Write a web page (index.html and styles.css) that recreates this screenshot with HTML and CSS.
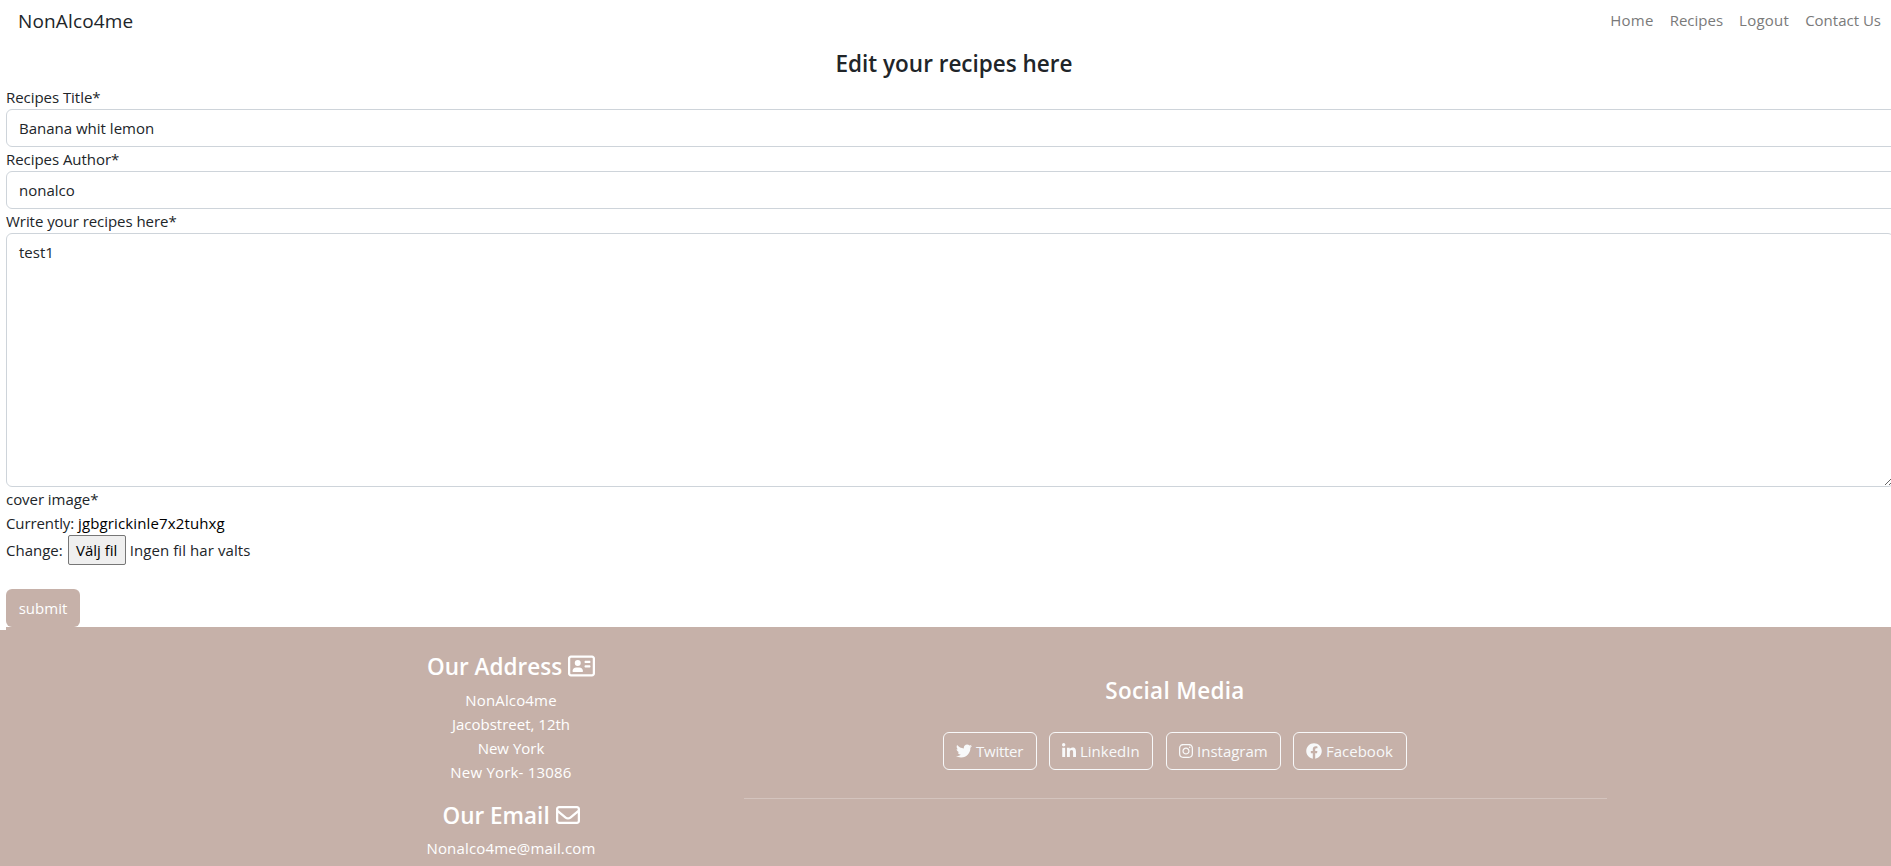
FILE: index.html
```html
<!DOCTYPE html>
<html lang="en">
<head>
<meta charset="utf-8">
<title>NonAlco4me</title>
<link rel="stylesheet" href="styles.css">
</head>
<body>
<nav class="navbar">
  <a class="brand">NonAlco4me</a>
  <div class="nav-links">
    <a class="home">Home</a><a class="recipes">Recipes</a><a class="logout">Logout</a><a class="contact">Contact Us</a>
  </div>
</nav>
<main class="content">
  <h1 class="title">Edit your recipes here</h1>
  <form class="recipe-form">
    <label class="label" for="title">Recipes Title*</label>
    <input class="control" id="title" type="text" value="Banana whit lemon">
    <label class="label" for="author">Recipes Author*</label>
    <input class="control" id="author" type="text" value="nonalco">
    <label class="label" for="body">Write your recipes here*</label>
    <textarea class="control area" id="body">test1</textarea>
    <div class="label">cover image*</div>
    <div class="current"><span class="tight">Currently:</span> <a class="file-link">jgbgrickinle7x2tuhxg</a></div>
    <div class="change"><span>Change:</span><button class="file-btn" type="button">Välj fil</button><span class="file-name">Ingen fil har valts</span></div>
    <button class="submit" type="button">submit</button>
  </form>
</main>
<footer class="footer">
  <div class="row">
    <section class="contact-col">
      <h2>Our Address <svg class="icon-card" viewBox="0 0 576 512"><path d="M512 80c8.800 0 16 7.200 16 16v320c0 8.800-7.200 16-16 16H64c-8.800 0-16-7.200-16-16V96c0-8.800 7.200-16 16-16h448zM64 32C28.700 32 0 60.700 0 96v320c0 35.300 28.700 64 64 64h448c35.300 0 64-28.700 64-64V96c0-35.300-28.700-64-64-64H64zm144 224a64 64 0 1 0 0-128 64 64 0 1 0 0 128zm-32 32c-44.200 0-80 35.800-80 80 0 8.800 7.200 16 16 16h192c8.800 0 16-7.200 16-16 0-44.200-35.800-80-80-80h-64zM376 144c-13.300 0-24 10.700-24 24s10.700 24 24 24h80c13.300 0 24-10.700 24-24s-10.700-24-24-24h-80zm0 96c-13.300 0-24 10.700-24 24s10.700 24 24 24h80c13.300 0 24-10.700 24-24s-10.700-24-24-24h-80z"/></svg></h2>
      <p class="address"><span class="a1">NonAlco4me</span><br>Jacobstreet, 12th<br>New York<br><span class="a4">New York- 13086</span></p>
      <h2 class="email-title">Our Email <svg class="icon-mail" viewBox="0 0 512 512"><path d="M64 112c-8.800 0-16 7.200-16 16v22.100L220.500 291.700c20.700 17 50.400 17 71.100 0L464 150.100V128c0-8.800-7.200-16-16-16H64zM48 212.200V384c0 8.800 7.200 16 16 16h384c8.800 0 16-7.200 16-16V212.200L322 328.800c-38.400 31.500-93.700 31.500-132 0L48 212.200zM0 128c0-35.300 28.700-64 64-64h384c35.300 0 64 28.700 64 64v256c0 35.300-28.700 64-64 64H64c-35.300 0-64-28.700-64-64V128z"/></svg></h2>
      <p class="mail">Nonalco4me@mail.com</p>
    </section>
    <section class="social-col">
      <h2 class="social-title">Social Media</h2>
      <div class="buttons">
        <a class="social tw"><svg class="icon" viewBox="0 0 512 512"><path d="M459.370 151.716c.325 4.548.325 9.097.325 13.645 0 138.720-105.583 298.558-298.558 298.558-59.452 0-114.680-17.219-161.137-47.106 8.447.974 16.568 1.299 25.340 1.299 49.055 0 94.213-16.568 130.274-44.832-46.132-.975-84.792-31.188-98.112-72.772 6.498.974 12.995 1.624 19.818 1.624 9.421 0 18.843-1.300 27.614-3.573-48.081-9.747-84.143-51.980-84.143-102.985v-1.299c13.969 7.797 30.214 12.670 47.431 13.319-28.264-18.843-46.781-51.005-46.781-87.391 0-19.492 5.197-37.360 14.294-52.954 51.655 63.675 129.300 105.258 216.365 109.807-1.624-7.797-2.599-15.918-2.599-24.040 0-57.828 46.782-104.934 104.934-104.934 30.213 0 57.502 12.670 76.670 33.137 23.715-4.548 46.456-13.320 66.599-25.340-7.798 24.366-24.366 44.833-46.132 57.827 21.117-2.273 41.584-8.122 60.426-16.243-14.292 20.791-32.161 39.308-52.628 54.253z"/></svg><span>Twitter</span></a>
        <a class="social li"><svg class="icon narrow" viewBox="0 0 448 512"><path d="M100.280 448H7.400V148.900h92.880zM53.790 108.100C24.090 108.100 0 83.500 0 53.800a53.790 53.790 0 0 1 107.580 0c0 29.700-24.100 54.300-53.790 54.300zM447.900 448h-92.680V302.400c0-34.700-.7-79.200-48.290-79.200-48.290 0-55.690 37.700-55.690 76.700V448h-92.780V148.900h89.080v40.800h1.300c12.400-23.500 42.690-48.300 87.880-48.300 94 0 111.280 61.900 111.280 142.300V448z"/></svg><span>LinkedIn</span></a>
        <a class="social ig"><svg class="icon narrow" viewBox="0 0 448 512"><path d="M224.100 141c-63.600 0-114.900 51.300-114.900 114.900s51.300 114.900 114.900 114.900S339 319.500 339 255.900 287.700 141 224.100 141zm0 189.600c-41.100 0-74.700-33.500-74.700-74.700s33.500-74.700 74.700-74.700 74.700 33.500 74.700 74.700-33.600 74.700-74.700 74.700zm146.400-194.300c0 14.900-12 26.800-26.800 26.800-14.900 0-26.800-12-26.800-26.800s12-26.800 26.800-26.800 26.800 12 26.800 26.800zm76.100 27.200c-1.700-35.900-9.900-67.700-36.200-93.900-26.200-26.200-58-34.400-93.900-36.200-37-2.100-147.900-2.100-184.900 0-35.800 1.700-67.600 9.900-93.900 36.100s-34.400 58-36.200 93.900c-2.100 37-2.100 147.900 0 184.900 1.700 35.900 9.900 67.700 36.200 93.900s58 34.400 93.900 36.200c37 2.100 147.900 2.100 184.900 0 35.900-1.700 67.700-9.900 93.900-36.200 26.200-26.200 34.400-58 36.200-93.900 2.100-37 2.100-147.800 0-184.800zM398.800 388c-7.800 19.600-22.900 34.700-42.600 42.600-29.500 11.700-99.500 9-132.100 9s-102.700 2.600-132.100-9c-19.600-7.800-34.700-22.900-42.600-42.600-11.700-29.500-9-99.500-9-132.100s-2.600-102.700 9-132.100c7.800-19.600 22.900-34.700 42.600-42.600 29.500-11.700 99.500-9 132.100-9s102.700-2.600 132.100 9c19.600 7.800 34.700 22.900 42.600 42.600 11.700 29.500 9 99.500 9 132.100s2.700 102.700-9 132.100z"/></svg><span>Instagram</span></a>
        <a class="social fb"><svg class="icon" viewBox="0 0 512 512"><path d="M504 256C504 119 393 8 256 8S8 119 8 256c0 123.780 90.690 226.380 209.250 245V327.690h-63V256h63v-54.640c0-62.150 37-96.480 93.670-96.480 27.140 0 55.520 4.840 55.520 4.840v61h-31.280c-30.800 0-40.410 19.120-40.410 38.730V256h68.780l-11 71.690h-57.780V501C413.310 482.380 504 379.780 504 256z"/></svg><span>Facebook</span></a>
      </div>
      <hr class="rule">
    </section>
  </div>
</footer>
</body>
</html>
```
FILE: styles.css
```css
* { box-sizing: border-box; }
html { overflow: hidden; }
body {
  margin: 0;
  height: 866px;
  overflow: hidden;
  font: 15px/24px "Open Sans", "Noto Sans", sans-serif;
  color: #212529;
  background: #fff;
}
h1, h2, p { margin: 0; }
svg { fill: currentColor; }

.navbar {
  display: flex;
  align-items: center;
  justify-content: space-between;
  height: 42px;
  padding: 0 10px 0 18px;
}
.brand { font-size: 19px; line-height: 30px; letter-spacing: .15px; }
.nav-links { display: flex; gap: 16px; padding-bottom: 2px; color: #7a7a7a; }
.home, .logout { letter-spacing: .25px; }

.content { width: 1891px; margin-left: 6px; }
.title {
  padding: 7px 0 7px 5px;
  font-size: 22.5px;
  font-weight: 600;
  line-height: 29px;
  text-align: center;
}
.recipe-form { display: flex; flex-direction: column; }
.label { display: block; letter-spacing: -.05px; }
.control {
  display: block;
  width: 100%;
  height: 38px;
  margin: 0;
  padding: 6px 12px;
  border: 1px solid #ced4da;
  border-radius: 6px;
  background: #fff;
  color: #212529;
  font: inherit;
  outline: 0;
}
.area { width: calc(100% - 3px); height: 254px; resize: vertical; }
.tight { letter-spacing: -.1px; }
.file-link { color: #000; letter-spacing: .13px; }
.change { display: flex; align-items: center; height: 30px; }
.file-btn {
  width: 58px;
  height: 30px;
  margin: 0 4px 0 5px;
  padding: 0;
  border: 1px solid #767676;
  border-radius: 2px;
  background: #efefef;
  color: #000;
  font: inherit;
}
.file-name { letter-spacing: .08px; }
.submit {
  align-self: flex-start;
  width: 74px;
  height: 38px;
  margin-top: 24px;
  padding: 0;
  border: 0;
  border-radius: 6px;
  background: #c6b1a9;
  color: #fff;
  font: inherit;
}

.footer {
  height: 239px;
  padding-top: 25px;
  background: linear-gradient(#fff, #fff) 0 0 / 6px 3px no-repeat #c6b1a9;
  color: #fff;
}
.row { display: flex; width: 1328px; margin-left: 279px; text-align: center; }
.contact-col { width: 464px; }
.social-col { width: 864px; padding-top: 24px; }
.footer h2 { height: 29px; margin-bottom: 7px; font-size: 22.5px; font-weight: 600; line-height: 29px; white-space: nowrap; }
.icon-card { width: 27px; height: 24px; vertical-align: -3px; }
.icon-mail { width: 24px; height: 24px; vertical-align: -3px; }
.address { margin-bottom: 17px; }
.footer .email-title { margin-bottom: 6px; }
.a1, .mail { letter-spacing: .16px; }
.a4 { letter-spacing: .2px; }
.footer .social-title { margin-bottom: 27px; letter-spacing: .3px; }
.buttons { display: flex; justify-content: center; gap: 12px; }
.social {
  display: flex;
  align-items: center;
  gap: 4px;
  height: 38px;
  padding-left: 12px;
  border: 1px solid #f8f9fa;
  border-radius: 6px;
  color: #f8f9fa;
}
.icon { width: 16px; height: 16px; }
.narrow { width: 14px; }
.tw { width: 94px; letter-spacing: -.25px; }
.li { width: 104px; margin-right: 1px; }
.ig { width: 115px; }
.fb { width: 114px; }
.rule { height: 1px; margin: 28px 0 0 1px; border: 0; background: #fff; opacity: .25; }
```
